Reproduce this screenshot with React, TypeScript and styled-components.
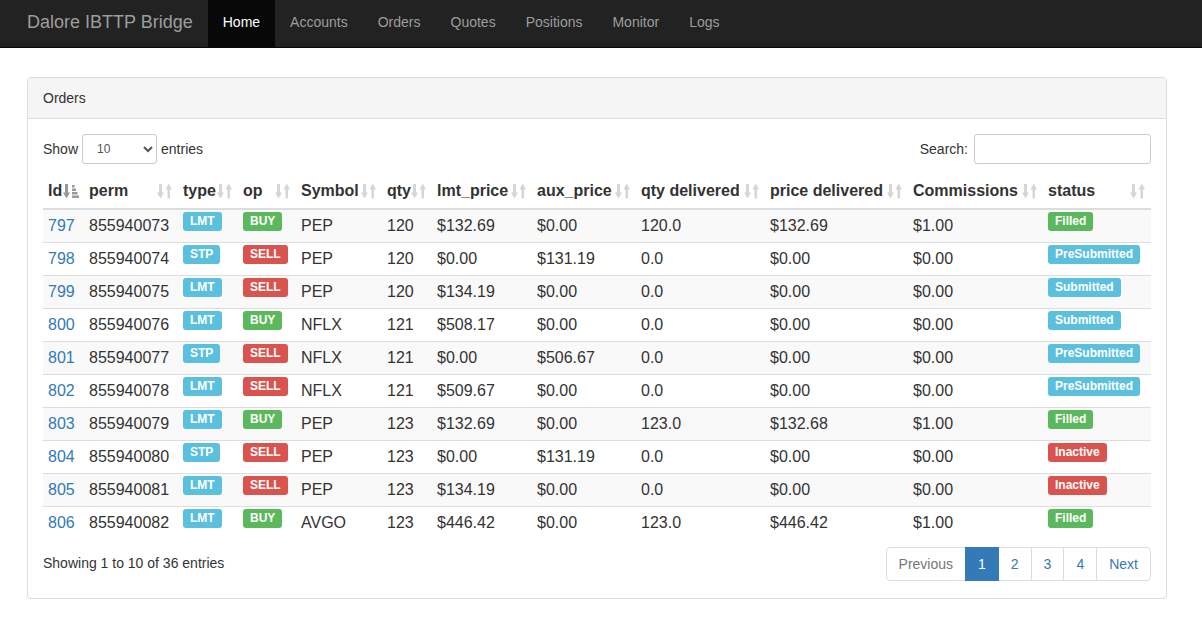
import React from "react";
import styled, { createGlobalStyle } from "styled-components";

const Global = createGlobalStyle`
  html, body { margin: 0; padding: 0; background: #fff; }
  body {
    font-family: "Liberation Sans", Arial, Helvetica, sans-serif;
    font-size: 14px;
    line-height: 20px;
    color: #333;
  }
  * { box-sizing: border-box; }
`;

const Navbar = styled.nav`
  display: flex;
  align-items: stretch;
  height: 48px;
  background: #222;
  border-bottom: 1px solid #080808;
  padding-left: 12px;
`;

const Brand = styled.a`
  font-size: 18px;
  line-height: 20px;
  padding: 12px 15px 15px;
  color: #9d9d9d;
  text-decoration: none;
`;

const NavLink = styled.a<{ $active?: boolean }>`
  font-size: 14px;
  line-height: 20px;
  padding: 12px 15px 15px;
  color: ${(p) => (p.$active ? "#fff" : "#9d9d9d")};
  background: ${(p) => (p.$active ? "#080808" : "transparent")};
  text-decoration: none;
`;

const Page = styled.main`
  padding: 29px 35px 0 27px;
`;

const Panel = styled.section`
  border: 1px solid #ddd;
  border-radius: 4px;
  box-shadow: 0 1px 1px rgba(0, 0, 0, 0.05);
  background: #fff;
`;

const PanelHeading = styled.div`
  padding: 10px 15px;
  background: #f5f5f5;
  border-bottom: 1px solid #ddd;
  border-radius: 3px 3px 0 0;
  line-height: 20px;
  color: #333;
`;

const PanelBody = styled.div`
  padding: 15px;
`;

const TopRow = styled.div`
  display: flex;
  justify-content: space-between;
  align-items: center;
  height: 30px;
`;

const ControlLabel = styled.label`
  display: flex;
  align-items: center;
  font-weight: normal;
`;

const Select = styled.select`
  height: 30px;
  width: 75px;
  margin: 0 4px;
  padding: 5px 10px;
  font-size: 12px;
  line-height: 1.5;
  color: #555;
  background: #fff;
  border: 1px solid #ccc;
  border-radius: 3px;
  font-family: inherit;
`;

const SearchInput = styled.input`
  height: 30px;
  width: 177px;
  margin-left: 6px;
  padding: 5px 10px;
  font-size: 12px;
  border: 1px solid #ccc;
  border-radius: 3px;
  font-family: inherit;
`;

const Table = styled.table`
  width: 1108px;
  table-layout: fixed;
  border-collapse: separate;
  border-spacing: 0;
  margin: 10px 0 6px;
  font-size: 16px;
  line-height: 22px;
`;

const Th = styled.th`
  padding: 6px 5px 6px;
  text-align: left;
  font-weight: bold;
  border-bottom: 2px solid #ddd;
  vertical-align: bottom;
`;

const ThInner = styled.div`
  display: flex;
  align-items: center;
  justify-content: space-between;
  white-space: nowrap;
`;

const Tr = styled.tr<{ $odd: boolean }>`
  background: ${(p) => (p.$odd ? "#f9f9f9" : "#fff")};
`;

const Td = styled.td<{ $first: boolean }>`
  padding: 5px;
  vertical-align: top;
  border-top: ${(p) => (p.$first ? "0" : "1px solid #ddd")};
  white-space: nowrap;
`;

const IdLink = styled.a`
  color: #337ab7;
  text-decoration: none;
`;

const colors: Record<string, string> = {
  info: "#5bc0de",
  danger: "#d9534f",
  success: "#5cb85c",
};

const Label = styled.span<{ $kind: string }>`
  display: inline-block;
  vertical-align: top;
  margin-top: -3px;
  padding: 3px 7px 4px;
  font-size: 12px;
  font-weight: bold;
  line-height: 12px;
  color: #fff;
  border-radius: 3px;
  background: ${(p) => colors[p.$kind]};
`;

const Footer = styled.div`
  display: flex;
  justify-content: space-between;
  align-items: flex-start;
`;

const Info = styled.div`
  padding-top: 8px;
  line-height: 20px;
`;

const Pagination = styled.ul`
  display: flex;
  list-style: none;
  margin: 2px 0;
  padding: 0;
`;

const PageItem = styled.li<{ $active?: boolean; $disabled?: boolean; $pos?: "first" | "last" }>`
  padding: 6px 12px;
  line-height: 20px;
  border: 1px solid ${(p) => (p.$active ? "#337ab7" : "#ddd")};
  margin-left: ${(p) => (p.$pos === "first" ? "0" : "-1px")};
  background: ${(p) => (p.$active ? "#337ab7" : "#fff")};
  color: ${(p) => (p.$active ? "#fff" : p.$disabled ? "#777" : "#337ab7")};
  border-radius: ${(p) =>
    p.$pos === "first" ? "4px 0 0 4px" : p.$pos === "last" ? "0 4px 4px 0" : "0"};
  position: relative;
  z-index: ${(p) => (p.$active ? 2 : 1)};
`;

const SortIcon = ({ active }: { active?: boolean }) => {
  const c = active ? "#999" : "#d6d6d6";
  if (active) {
    return (
      <svg width="16" height="17" viewBox="0 0 16 17">
        <rect x="2" y="1" width="3" height="9" fill={c} />
        <polygon points="0,9.5 7,9.5 3.5,15.5" fill={c} />
        <rect x="9" y="2" width="2.5" height="2.5" fill={c} />
        <rect x="9" y="5.5" width="4" height="2.5" fill={c} />
        <rect x="9" y="9" width="5.5" height="2.5" fill={c} />
        <rect x="9" y="12.5" width="7" height="2.5" fill={c} />
      </svg>
    );
  }
  return (
    <svg width="16" height="17" viewBox="0 0 16 17">
      <rect x="2" y="1" width="3" height="9" fill={c} />
      <polygon points="0,9.5 7,9.5 3.5,15.5" fill={c} />
      <polygon points="8.5,6.5 15,6.5 11.75,0.5" fill={c} />
      <rect x="10.5" y="6" width="2.5" height="9.5" fill={c} />
    </svg>
  );
};

const columns = [
  { name: "Id", w: 41 },
  { name: "perm", w: 94 },
  { name: "type", w: 60 },
  { name: "op", w: 58 },
  { name: "Symbol", w: 86 },
  { name: "qty", w: 50 },
  { name: "lmt_price", w: 100 },
  { name: "aux_price", w: 104 },
  { name: "qty delivered", w: 129 },
  { name: "price delivered", w: 143 },
  { name: "Commissions", w: 135 },
  { name: "status", w: 108 },
];

type Row = [string, string, string, string, string, string, string, string, string, string, string, string];

const rows: Row[] = [
  ["797", "855940073", "LMT", "BUY", "PEP", "120", "$132.69", "$0.00", "120.0", "$132.69", "$1.00", "Filled"],
  ["798", "855940074", "STP", "SELL", "PEP", "120", "$0.00", "$131.19", "0.0", "$0.00", "$0.00", "PreSubmitted"],
  ["799", "855940075", "LMT", "SELL", "PEP", "120", "$134.19", "$0.00", "0.0", "$0.00", "$0.00", "Submitted"],
  ["800", "855940076", "LMT", "BUY", "NFLX", "121", "$508.17", "$0.00", "0.0", "$0.00", "$0.00", "Submitted"],
  ["801", "855940077", "STP", "SELL", "NFLX", "121", "$0.00", "$506.67", "0.0", "$0.00", "$0.00", "PreSubmitted"],
  ["802", "855940078", "LMT", "SELL", "NFLX", "121", "$509.67", "$0.00", "0.0", "$0.00", "$0.00", "PreSubmitted"],
  ["803", "855940079", "LMT", "BUY", "PEP", "123", "$132.69", "$0.00", "123.0", "$132.68", "$1.00", "Filled"],
  ["804", "855940080", "STP", "SELL", "PEP", "123", "$0.00", "$131.19", "0.0", "$0.00", "$0.00", "Inactive"],
  ["805", "855940081", "LMT", "SELL", "PEP", "123", "$134.19", "$0.00", "0.0", "$0.00", "$0.00", "Inactive"],
  ["806", "855940082", "LMT", "BUY", "AVGO", "123", "$446.42", "$0.00", "123.0", "$446.42", "$1.00", "Filled"],
];

const opKind = (op: string) => (op === "BUY" ? "success" : "danger");
const statusKind = (s: string) =>
  s === "Filled" ? "success" : s === "Inactive" ? "danger" : "info";

export default function App() {
  return (
    <>
      <Global />
      <Navbar>
        <Brand>Dalore IBTTP Bridge</Brand>
        <NavLink $active>Home</NavLink>
        <NavLink>Accounts</NavLink>
        <NavLink>Orders</NavLink>
        <NavLink>Quotes</NavLink>
        <NavLink>Positions</NavLink>
        <NavLink>Monitor</NavLink>
        <NavLink>Logs</NavLink>
      </Navbar>
      <Page>
        <Panel>
          <PanelHeading>Orders</PanelHeading>
          <PanelBody>
            <TopRow>
              <ControlLabel>
                Show
                <Select defaultValue="10">
                  <option value="10">10</option>
                  <option value="25">25</option>
                  <option value="50">50</option>
                  <option value="100">100</option>
                </Select>
                entries
              </ControlLabel>
              <ControlLabel>
                Search:
                <SearchInput type="search" />
              </ControlLabel>
            </TopRow>
            <Table>
              <colgroup>
                {columns.map((c) => (
                  <col key={c.name} style={{ width: c.w }} />
                ))}
              </colgroup>
              <thead>
                <tr>
                  {columns.map((c, i) => (
                    <Th key={c.name}>
                      <ThInner>
                        <span>{c.name}</span>
                        <SortIcon active={i === 0} />
                      </ThInner>
                    </Th>
                  ))}
                </tr>
              </thead>
              <tbody>
                {rows.map((r, ri) => (
                  <Tr key={r[0]} $odd={ri % 2 === 0}>
                    <Td $first={ri === 0}>
                      <IdLink href="#">{r[0]}</IdLink>
                    </Td>
                    <Td $first={ri === 0}>{r[1]}</Td>
                    <Td $first={ri === 0}>
                      <Label $kind="info">{r[2]}</Label>
                    </Td>
                    <Td $first={ri === 0}>
                      <Label $kind={opKind(r[3])}>{r[3]}</Label>
                    </Td>
                    <Td $first={ri === 0}>{r[4]}</Td>
                    <Td $first={ri === 0}>{r[5]}</Td>
                    <Td $first={ri === 0}>{r[6]}</Td>
                    <Td $first={ri === 0}>{r[7]}</Td>
                    <Td $first={ri === 0}>{r[8]}</Td>
                    <Td $first={ri === 0}>{r[9]}</Td>
                    <Td $first={ri === 0}>{r[10]}</Td>
                    <Td $first={ri === 0}>
                      <Label $kind={statusKind(r[11])}>{r[11]}</Label>
                    </Td>
                  </Tr>
                ))}
              </tbody>
            </Table>
            <Footer>
              <Info>Showing 1 to 10 of 36 entries</Info>
              <Pagination>
                <PageItem $disabled $pos="first">Previous</PageItem>
                <PageItem $active>1</PageItem>
                <PageItem>2</PageItem>
                <PageItem>3</PageItem>
                <PageItem>4</PageItem>
                <PageItem $pos="last">Next</PageItem>
              </Pagination>
            </Footer>
          </PanelBody>
        </Panel>
      </Page>
    </>
  );
}
